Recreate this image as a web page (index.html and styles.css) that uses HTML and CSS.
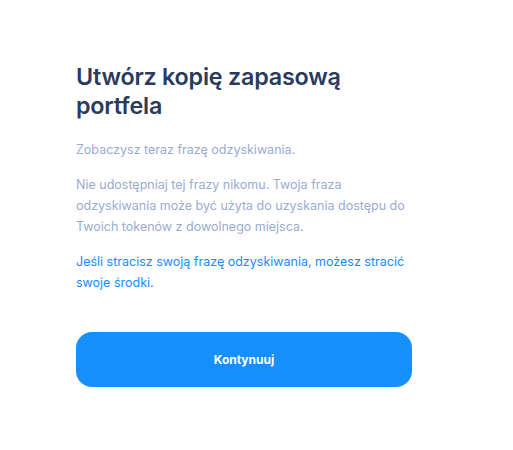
FILE: index.html
```html
<!DOCTYPE html>
<html lang="pl">
<head>
<meta charset="utf-8">
<link rel="stylesheet" href="styles.css">
</head>
<body>
<main class="card">
  <h1 class="title">Utwórz kopię zapasową portfela</h1>
  <p class="text">Zobaczysz teraz frazę odzyskiwania.</p>
  <p class="text">Nie udostępniaj tej frazy nikomu. Twoja fraza odzyskiwania może być użyta do uzyskania dostępu do Twoich tokenów z dowolnego miejsca.</p>
  <p class="text warn">Jeśli stracisz swoją frazę odzyskiwania, możesz stracić swoje środki.</p>
  <button class="btn" type="button">Kontynuuj</button>
</main>
</body>
</html>
```
FILE: styles.css
```css
html, body { margin: 0; padding: 0; background: #ffffff; }
body { font-family: "Inter", "DejaVu Sans", sans-serif; }
.card {
  width: 336px;
  padding: 62px 0 0 76px;
  display: flex;
  flex-direction: column;
}
.title {
  margin: 0 0 19px;
  font-size: 23.3px;
  line-height: 29px;
  font-weight: 600;
  color: #2a3b5d;
  letter-spacing: -0.2px;
}
.text {
  margin: 0 0 14px;
  font-size: 12.5px;
  line-height: 21px;
  color: #9aaccf;
}
.warn { color: #1a8cff; }
.btn {
  margin-top: 25px;
  height: 55px;
  width: 336px;
  border: none;
  border-radius: 16px;
  background: #168fff;
  color: #ffffff;
  font-family: "Inter", sans-serif;
  font-size: 12px;
  font-weight: 700;
}
```
